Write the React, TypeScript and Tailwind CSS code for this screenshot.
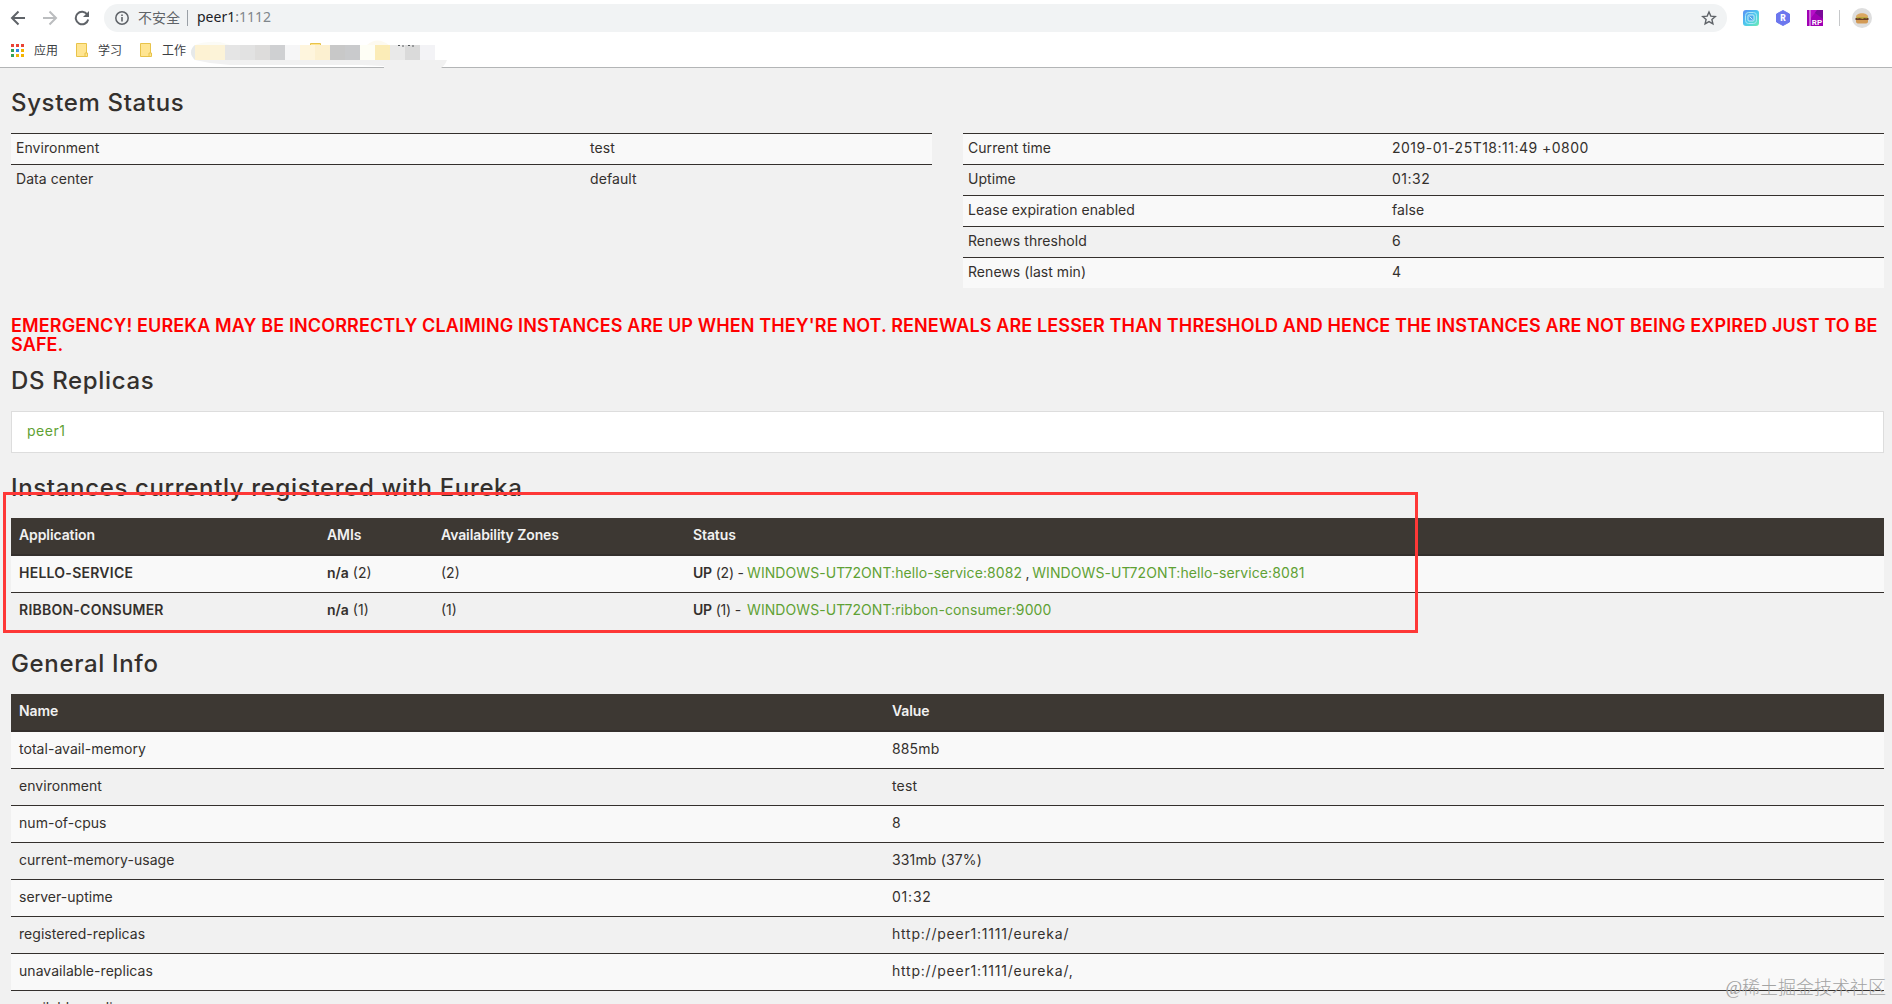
import { Fragment, type ReactNode } from 'react';
import clsx from 'clsx';

interface Row {
  name: string;
  value: string;
  wide?: boolean;
}

interface Application {
  name: string;
  count: number;
  instances: string[];
}

const environment: Row[] = [
  { name: 'Environment', value: 'test' },
  { name: 'Data center', value: 'default' },
];

const timing: Row[] = [
  { name: 'Current time', value: '2019-01-25T18:11:49 +0800', wide: true },
  { name: 'Uptime', value: '01:32', wide: true },
  { name: 'Lease expiration enabled', value: 'false' },
  { name: 'Renews threshold', value: '6' },
  { name: 'Renews (last min)', value: '4' },
];

const applications: Application[] = [
  { name: 'HELLO-SERVICE', count: 2, instances: ['WINDOWS-UT72ONT:hello-service:8082', 'WINDOWS-UT72ONT:hello-service:8081'] },
  { name: 'RIBBON-CONSUMER', count: 1, instances: ['WINDOWS-UT72ONT:ribbon-consumer:9000'] },
];

const generalInfo: Row[] = [
  { name: 'total-avail-memory', value: '885mb' },
  { name: 'environment', value: 'test' },
  { name: 'num-of-cpus', value: '8' },
  { name: 'current-memory-usage', value: '331mb (37%)' },
  { name: 'server-uptime', value: '01:32', wide: true },
  { name: 'registered-replicas', value: 'http://peer1:1111/eureka/', wide: true },
  { name: 'unavailable-replicas', value: 'http://peer1:1111/eureka/,', wide: true },
  { name: 'available-replicas', value: '' },
];

const blurBlocks = [
  'w-[15px] bg-[#fdf2d3]', 'w-[15px] bg-[#fcf3d8]', 'w-[15px] bg-[#e5e5e5]', 'w-[15px] bg-[#e2e2e2]',
  'w-[15px] bg-[#dddcdb]', 'w-[15px] bg-[#cfd0d2]', 'w-[15px] bg-[#f6f6f7]', 'w-[15px] bg-[#fef5dd]',
  'w-[15px] bg-[#fcf0d0]', 'w-[15px] bg-[#c8c8c8]', 'w-[15px] bg-[#c9cacc]', 'w-[15px] bg-[#fefef5]',
  'w-[15px] bg-[#fbecb7]', 'w-[15px] bg-[#e9e9e9]', 'w-[15px] bg-[#dadada]', 'w-[15px] bg-[#f3f3f6]',
];

function Toolbar() {
  return (
    <div className="flex h-9 items-center pl-[10px] font-['Noto_Sans','Noto_Sans_CJK_SC',sans-serif]">
      <svg width="16" height="16" viewBox="0 0 16 16" fill="none" stroke="#5f6368" strokeWidth="2">
        <path d="M15 8H2M8.5 1.5 2 8l6.500 6.500" />
      </svg>
      <svg className="ml-4" width="16" height="16" viewBox="0 0 16 16" fill="none" stroke="#bbbdbf" strokeWidth="2">
        <path d="M1 8h13M7.500 1.500 14 8l-6.500 6.500" />
      </svg>
      <svg className="ml-4" width="16" height="16" viewBox="0 0 16 16">
        <path d="M13.300 4.500A6.300 6.300 0 1 0 14.200 9.500" fill="none" stroke="#5f6368" strokeWidth="2" />
        <path d="M15 1v6H9z" fill="#5f6368" />
      </svg>
      <div className="ml-[14px] flex h-7 w-[1623px] items-center rounded-full bg-[#f1f3f4] pl-[11px] pr-[10px]">
        <svg width="14" height="14" viewBox="0 0 14 14">
          <circle cx="7" cy="7" r="6.200" fill="none" stroke="#5f6368" strokeWidth="1.500" />
          <path d="M6.200 6h1.600v4.500H6.200zM6.200 3.400h1.600V5H6.200z" fill="#5f6368" />
        </svg>
        <span className="ml-[9px] text-[14px] leading-7 text-[#5f6368]">不安全</span>
        <span className="ml-[7px] h-4 w-px bg-[#9aa0a6]" />
        <span className="ml-[9px] -mt-0.5 text-[14px] leading-7 text-[#202124]">
          peer1<span className="text-[#80868b]">:1112</span>
        </span>
        <svg className="ml-auto" width="16" height="16" viewBox="0 0 16 16" fill="none" stroke="#5f6368" strokeWidth="1.400">
          <path d="m8 2 1.800 4.100 4.500.4-3.400 3 1 4.400L8 11.600l-3.900 2.300 1-4.400-3.400-3 4.500-.4z" />
        </svg>
      </div>
      <svg className="ml-4" width="16" height="16" viewBox="0 0 16 16">
        <defs>
          <linearGradient id="ext" x1="0" y1="0" x2="1" y2="1">
            <stop offset="0" stopColor="#5b8df5" />
            <stop offset=".5" stopColor="#4cc8ee" />
            <stop offset="1" stopColor="#6cebb0" />
          </linearGradient>
        </defs>
        <rect width="16" height="16" rx="3" fill="url(#ext)" />
        <rect x="2.500" y="2.500" width="11" height="11" rx="3" fill="none" stroke="#a9e8f8" />
        <rect x="5" y="5" width="6" height="6" rx="1" fill="#4fa8ea" stroke="#c4f0fa" />
        <path d="m6.500 6.500 3 3" stroke="#c4f0fa" />
      </svg>
      <svg className="ml-4" width="16" height="16" viewBox="0 0 16 16">
        <path d="M8 .500 14.500 4v8L8 15.500 1.500 12V4z" fill="#6c77ee" stroke="#6c77ee" strokeLinejoin="round" />
        <text x="8" y="11" textAnchor="middle" fontSize="8.500" fontWeight="900" fontFamily="Roboto" fill="#fff">R</text>
      </svg>
      <svg className="ml-4" width="16" height="16" viewBox="0 0 16 16">
        <path d="M0 0h16v16H0z" fill="#a000b4" />
        <path d="M4 0h12v9z" fill="#7b0a99" />
        <path d="M4 0h6l-6 8z" fill="#b70fc8" />
        <path d="M2.500 0h1v16h-1z" fill="#f3c9f7" />
        <text x="10" y="14.500" textAnchor="middle" fontSize="8" fontWeight="700" fontFamily="Roboto" fill="#fff">RP</text>
      </svg>
      <span className="ml-4 h-4 w-px bg-[#c6c8ca]" />
      <svg className="ml-[12px]" width="20" height="20" viewBox="0 0 20 20">
        <circle cx="10" cy="10" r="10" fill="#dedede" />
        <path d="M4 9c0-5 12-5 12 0z" fill="#dba862" />
        <path d="M4 12h12v1.500Q16 15.500 13 15.500H7q-3 0-3-2z" fill="#d39a55" />
        <path d="M3.500 10h13v2h-13z" fill="#6a3d25" />
        <path d="M3.500 9h13l-2 1.500-2-.5-2 1-3-1-2 .5z" fill="#b9a83c" />
      </svg>
    </div>
  );
}

function Folder() {
  return (
    <svg width="12" height="14" viewBox="0 0 12 14">
      <path d="M.500.500h10v9.500h1v3.500H.500z" fill="#ffe592" stroke="#e8c34a" />
      <path d="M9 13.500V10h1.500" fill="none" stroke="#e8c34a" />
    </svg>
  );
}

function Bookmarks() {
  const dots = ['#ea4335', '#ea4335', '#ea4335', '#34a05a', '#2f8ae8', '#f4b400', '#34a05a', '#f4b400', '#f4b400'];
  return (
    <div className="relative flex h-[31px] items-center pl-[11px] pb-[3px] font-['Noto_Sans_CJK_SC',sans-serif] text-[12px] leading-5 text-[#3c4043]">
      <svg width="13" height="13" viewBox="0 0 13 13">
        {dots.map((c, i) => (
          <rect key={i} x={(i % 3) * 5} y={Math.floor(i / 3) * 5} width="3" height="3" fill={c} />
        ))}
      </svg>
      <span className="ml-[10px] mr-[18px]">应用</span>
      <Folder />
      <span className="ml-[10px] mr-[18px]">学习</span>
      <Folder />
      <span className="ml-[10px]">工作</span>

      {/* smudged part of the bookmark bar */}
      <div className="absolute left-[190px] top-[4px] z-10">
        <svg className="absolute left-0 top-0" width="262" height="32" viewBox="0 0 262 32">
          <path d="M5 5Q15 1 30 2l10 3z" fill="#fbfbf6" />
          <path d="M5 5Q-3 12 5 20l15 3 20 2h131l23 1v3q5 2 20 2h30q10-2 13-11H5z" fill="#f1f1f1" />
          <path d="M5 5Q-3 12 5 20z" fill="#e6e9e9" />
          <path d="M120.500 3.500h10v3h-10z" fill="#ffe592" stroke="#e8c34a" />
          <path d="M177 5q10-9 22 0z" fill="#fdfaf0" />
        </svg>
        <div className="relative ml-[5px] mt-[5px] flex h-[15px]">
          {blurBlocks.map((cls, i) => (
            <span key={i} className={clsx('h-full shrink-0', cls)} />
          ))}
        </div>
        <svg className="absolute left-[207px] top-[5px]" width="18" height="2" viewBox="0 0 18 2">
          <path d="M1 .500h2m2 .500h2m4-.500h2m2 .500h2" stroke="#55595c" />
        </svg>
      </div>
    </div>
  );
}

function Heading({ children, className }: { children: ReactNode; className?: string }) {
  return (
    <h1 className={clsx('text-[24px] leading-[26px] font-medium tracking-[0.65px] text-[#34302d]', className)}>
      {children}
    </h1>
  );
}

function StatusTable({ rows, nameClass }: { rows: Row[]; nameClass: string }) {
  return (
    <div className="w-[921px]">
      {rows.map((row) => (
        <div key={row.name} className="flex h-[31px] border-t border-[#34302d] px-[5px] pt-[4px] leading-5 odd:bg-[#f9f9f9]">
          <span className={clsx('tracking-[0.05px]', nameClass)}>{row.name}</span>
          <span className={row.wide ? 'tracking-[0.49px]' : 'tracking-[0.1px]'}>{row.value}</span>
        </div>
      ))}
    </div>
  );
}

const headRow = 'flex h-[38px] border-b-2 border-[#34302d] bg-[#3d3833] px-2 pt-[7px] font-semibold tracking-[-0.1px] text-[#f1f1f1]';
const bodyRow = 'flex h-[37px] border-b border-[#34302d] px-2 pt-[7px] odd:bg-[#f9f9f9]';

function Instances() {
  return (
    <div className="mt-[17px] leading-5">
      <div className={headRow}>
        <span className="w-[308px]">Application</span>
        <span className="w-[114px]">AMIs</span>
        <span className="w-[252px]">Availability Zones</span>
        <span>Status</span>
      </div>
      <div>
        {applications.map((app) => (
          <div key={app.name} className={clsx(bodyRow, 'last:h-9 last:border-b-0')}>
            <span className="w-[308px] font-semibold tracking-[0.25px]">{app.name}</span>
            <span className="w-[114px]"><b className="font-semibold">n/a</b> ({app.count})</span>
            <span className="w-[252px]">({app.count})</span>
            <span className="w-[54px] tracking-[-0.2px] whitespace-nowrap">
              <b className="font-semibold">UP</b> ({app.count}) -
            </span>
            <span>
              {app.instances.map((id, i) => (
                <Fragment key={id}>
                  {i > 0 && <span className="tracking-[-0.6px]"> , </span>}
                  <a className="tracking-[0.09px] text-[#5fa134]">{id}</a>
                </Fragment>
              ))}
            </span>
          </div>
        ))}
      </div>
    </div>
  );
}

export default function App() {
  return (
    <div className="relative h-[1004px] w-[1892px] overflow-hidden bg-[#f1f1f1] font-['Inter',sans-serif] text-[14px] text-[#34302d]">
      <header className="h-[68px] border-b border-[#b3b5b6] bg-white">
        <Toolbar />
        <Bookmarks />
      </header>

      <main className="w-[1884px] pl-[11px]">
        <Heading className="pt-[22px]">System Status</Heading>
        <div className="mt-[17px] flex h-[155px] gap-[31px]">
          <StatusTable rows={environment} nameClass="w-[574px]" />
          <StatusTable rows={timing} nameClass="w-[424px]" />
        </div>

        <p className="mt-[28px] whitespace-nowrap text-[18px] leading-[19px] font-semibold tracking-[0.13px] text-[#ff0000]">
          EMERGENCY! EUREKA MAY BE INCORRECTLY CLAIMING INSTANCES ARE UP WHEN THEY'RE NOT. RENEWALS ARE LESSER THAN THRESHOLD AND HENCE THE INSTANCES ARE NOT BEING EXPIRED JUST TO BE
          <br />
          SAFE.
        </p>

        <Heading className="mt-[14px]">DS Replicas</Heading>
        <div className="mt-[17px] h-[42px] border border-[#dddddd] bg-white px-[15px] pt-[9px] leading-5">
          <a className="tracking-[0.5px] text-[#5fa134]">peer1</a>
        </div>

        <Heading className="mt-[22px]">Instances currently registered with Eureka</Heading>
        <Instances />

        <Heading className="mt-[22px]">General Info</Heading>
        <div className="mt-[17px] leading-5">
          <div className={headRow}>
            <span className="w-[873px]">Name</span>
            <span>Value</span>
          </div>
          <div>
            {generalInfo.map((row) => (
              <div key={row.name} className={bodyRow}>
                <span className="w-[873px] tracking-[0.04px]">{row.name}</span>
                <span className={row.wide ? 'tracking-[0.78px]' : 'tracking-[0.15px]'}>{row.value}</span>
              </div>
            ))}
          </div>
        </div>
      </main>

      <div className="absolute left-[3px] top-[492px] h-[141px] w-[1415px] border-[3px] border-[#fe3837]" />
      <span className="absolute bottom-[4px] right-[6px] font-['Liberation_Serif','Noto_Sans_CJK_SC',serif] text-[18px] leading-[24px] font-light text-[#a3a3a3]">
        @稀土掘金技术社区
      </span>
    </div>
  );
}
